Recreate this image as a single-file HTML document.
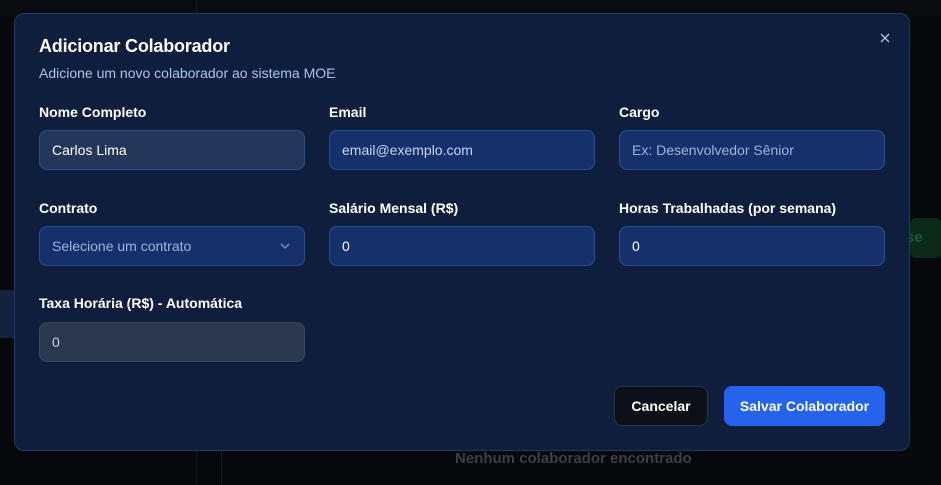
<!DOCTYPE html>
<html><head><meta charset="utf-8"><style>
*{box-sizing:border-box;margin:0;padding:0}
body{width:941px;height:485px;overflow:hidden;background:#07080c;font-family:"Liberation Sans",sans-serif;position:relative}
.bg{position:absolute;color:#3a3f4a;font-size:15px;font-weight:bold}
.modal{position:absolute;left:14px;top:13px;width:896px;height:438px;background:#0f1e3d;border:1px solid #1f3a6e;border-radius:10px}
h1{position:absolute;left:24px;top:22px;font-size:18px;color:#fff;font-weight:bold;letter-spacing:-0.2px}
.sub{position:absolute;left:24px;top:51px;font-size:14px;color:#a8c4ee}
.lab{position:absolute;font-size:14px;color:#fff;font-weight:bold}
.inp{position:absolute;width:266px;height:40px;border:1px solid #2d4f90;border-radius:8px;font-size:14px;padding-left:12px;line-height:38px;color:#fff}
.blue{background:#15306b}
.ph{color:#9db5dd}
.btn{position:absolute;top:372px;height:40px;border-radius:8px;font-size:14px;font-weight:bold;color:#fff;text-align:center;line-height:40px}
</style></head><body>
<div style="position:absolute;left:0;top:0;width:941px;height:16px;background:#0b0c10"></div>
<div style="position:absolute;left:0;top:290px;width:14px;height:48px;background:#14213f"></div>
<div style="position:absolute;left:196px;top:0;width:1px;height:485px;background:#16181d"></div>
<div style="position:absolute;left:221px;top:440px;width:1px;height:45px;background:#1a1c22"></div>
<div style="position:absolute;left:910px;top:218px;width:31px;height:40px;background:#0c2a18;border-radius:6px"></div>
<div class="bg" style="left:906px;top:229px;color:#1e5a33">se</div>
<div class="bg" style="left:455px;top:450px;color:#3b3f47;font-size:15px">Nenhum colaborador encontrado</div>
<div class="modal">
<h1>Adicionar Colaborador</h1>
<div class="sub">Adicione um novo colaborador ao sistema MOE</div>
<svg style="position:absolute;left:865px;top:19px" width="10" height="10" viewBox="0 0 10 10"><path d="M1 1l8 8M9 1l-8 8" stroke="#b9c3d4" stroke-width="1.3"/></svg>
<div class="lab" style="left:24px;top:90px">Nome Completo</div>
<div class="lab" style="left:314px;top:90px">Email</div>
<div class="lab" style="left:604px;top:90px">Cargo</div>
<div class="inp" style="left:24px;top:116px;background:#24365a">Carlos Lima</div>
<div class="inp blue" style="left:314px;top:116px"><span class="ph" style="color:#c6d6f2">email@exemplo.com</span></div>
<div class="inp blue" style="left:604px;top:116px"><span class="ph">Ex: Desenvolvedor Sênior</span></div>
<div class="lab" style="left:24px;top:186px">Contrato</div>
<div class="lab" style="left:314px;top:186px">Salário Mensal (R$)</div>
<div class="lab" style="left:604px;top:186px">Horas Trabalhadas (por semana)</div>
<div class="inp blue" style="left:24px;top:212px"><span class="ph">Selecione um contrato</span>
<svg style="position:absolute;right:14px;top:15px" width="10" height="8" viewBox="0 0 10 8"><path d="M1 2l4 4 4-4" stroke="#7d92b8" fill="none" stroke-width="1.3"/></svg></div>
<div class="inp blue" style="left:314px;top:212px">0</div>
<div class="inp blue" style="left:604px;top:212px">0</div>
<div class="lab" style="left:24px;top:281px">Taxa Horária (R$) - Automática</div>
<div class="inp" style="left:24px;top:308px;background:#2b3850;border-color:#3a4763;color:#c9d0dc">0</div>
<div class="btn" style="left:599px;width:94px;background:#0d1117;border:1px solid #243252;line-height:38px">Cancelar</div>
<div class="btn" style="left:709px;width:161px;background:#2563eb">Salvar Colaborador</div>
</div>
</body></html>
